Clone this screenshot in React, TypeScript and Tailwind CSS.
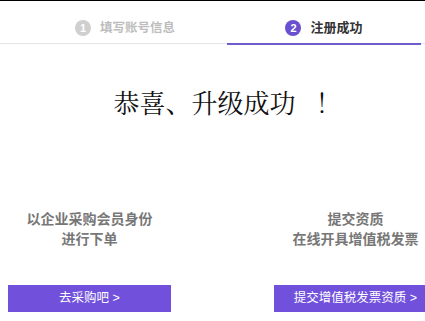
import React from 'react';

const sans = '"Liberation Sans", "Noto Sans CJK SC", sans-serif';

export default function App() {
  return (
    <div
      className="w-[425px] h-[321px] bg-white border-t border-black overflow-hidden"
      style={{ fontFamily: sans }}
    >
      {/* Steps */}
      <div className="h-[43px] border-b border-[#e5e5e5] flex">
        <div className="ml-[28px] w-[194px] shrink-0 flex items-start justify-center gap-[9px] pt-[19px]">
          <span className="w-[16px] h-[16px] rounded-full bg-[#cfcfcf] text-white text-[11px] font-bold flex items-center justify-center leading-none">
            1
          </span>
          <span className="text-[12.5px] leading-[16px] font-bold text-[#bdbdbd]">填写账号信息</span>
        </div>
        <div className="ml-[5px] w-[194px] shrink-0 relative flex items-start justify-center gap-[9px] pt-[19px]">
          <span className="w-[16px] h-[16px] rounded-full bg-[#6a4fcf] text-white text-[11px] font-bold flex items-center justify-center leading-none">
            2
          </span>
          <span className="text-[13px] leading-[16px] font-bold text-[#333]">注册成功</span>
          <div className="absolute left-0 right-0 bottom-[-2px] h-[2px] bg-[#6d5ccb]" />
        </div>
      </div>

      {/* Title */}
      <div
        className="mt-[45px] pl-[30px] text-center text-[26px] leading-[26px] text-[#111]"
        style={{ fontFamily: '"Noto Serif CJK SC", "Noto Sans CJK SC", serif' }}
      >
        恭喜、升级成功<span className="pl-[20px]">！</span>
      </div>

      {/* Actions */}
      <div className="mt-[94px] pl-[8px] flex gap-[103px]">
        <div className="w-[163px] shrink-0 flex flex-col items-center">
          <div className="text-[14px] leading-[20px] font-bold text-[#777] text-center whitespace-nowrap">
            <div>以企业采购会员身份</div>
            <div>进行下单</div>
          </div>
          <button className="mt-[36px] w-[163px] h-[27px] bg-[#7151dc] text-white text-[12.5px] flex items-center justify-center">
            去采购吧 &gt;
          </button>
        </div>
        <div className="w-[163px] shrink-0 flex flex-col items-center">
          <div className="text-[14px] leading-[20px] font-bold text-[#777] text-center whitespace-nowrap">
            <div>提交资质</div>
            <div>在线开具增值税发票</div>
          </div>
          <button className="mt-[36px] w-[163px] h-[27px] bg-[#7151dc] text-white text-[12.5px] flex items-center justify-center">
            提交增值税发票资质 &gt;
          </button>
        </div>
      </div>
    </div>
  );
}
